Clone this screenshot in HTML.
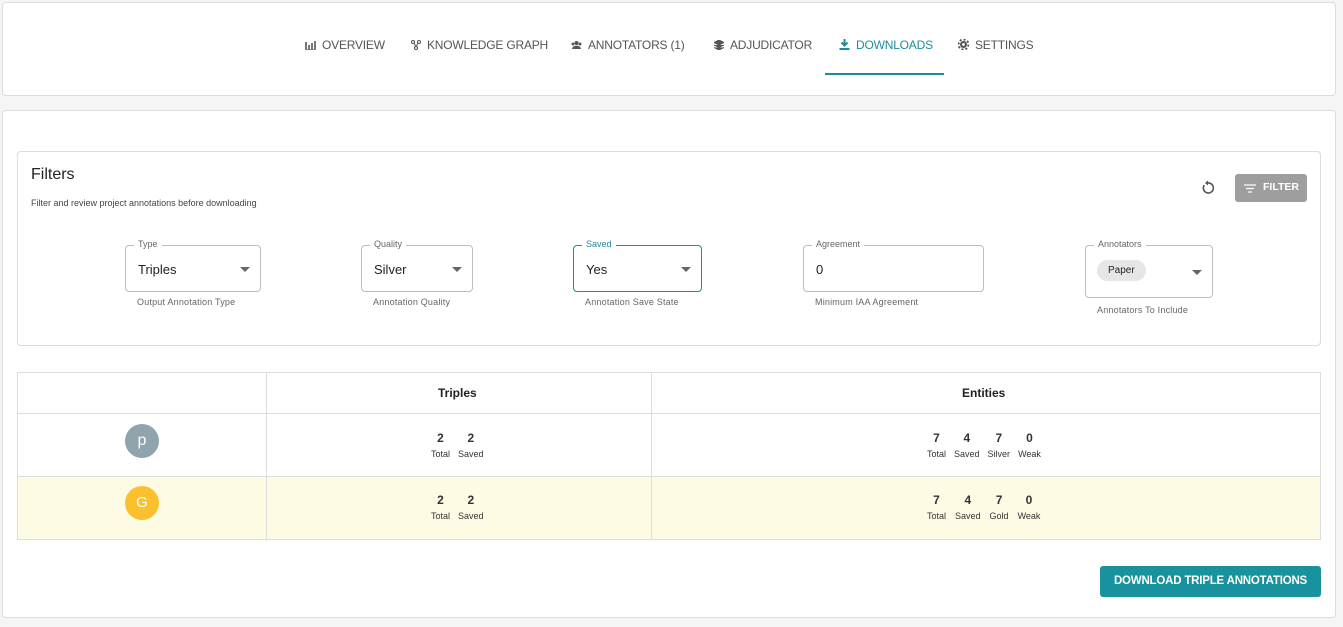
<!DOCTYPE html>
<html><head><style>
*{box-sizing:border-box;margin:0;padding:0}
body{width:1343px;height:627px;background:#f5f5f5;font-family:"Liberation Sans",sans-serif;position:relative;overflow:hidden;color:#222}
.abs{position:absolute}
.card{position:absolute;background:#fff;border:1px solid #dcdcdc;border-radius:4px}
.nav{position:absolute;top:38px;font-size:12px;color:#555;white-space:nowrap;letter-spacing:-0.2px}
.nav svg{vertical-align:-1px;margin-right:6px}
.fld{position:absolute;border:1px solid #bdbdbd;border-radius:4px;height:47px}
.fld .lb{position:absolute;top:-7px;left:8px;background:#fff;padding:0 4px;font-size:9px;color:#666}
.fld .v{position:absolute;left:12px;top:16px;font-size:13px;color:#222}
.fld .ar{position:absolute;right:10px;top:21px;width:0;height:0;border-left:5px solid transparent;border-right:5px solid transparent;border-top:5px solid #666}
.help{position:absolute;font-size:9px;color:#666;letter-spacing:.2px}
.st{text-align:center;font-size:9px;color:#333}
.st b{display:block;font-size:12px;margin-bottom:4px}
.grp{position:absolute;display:flex;gap:8px}
</style></head><body>
<div class="card" style="left:2px;top:2px;width:1334px;height:94px"></div>
<div class="nav" style="left:305px"><svg width="11" height="10"><path d="M0 10h11M1 2v7M4 5v4M7 3v6M10 1v8" stroke="#555" stroke-width="1.6"/></svg>OVERVIEW</div>
<div class="nav" style="left:411px"><svg width="10" height="10"><circle cx="2" cy="2" r="1.5" fill="none" stroke="#555"/><circle cx="8" cy="2" r="1.5" fill="none" stroke="#555"/><circle cx="5" cy="8" r="1.5" fill="none" stroke="#555"/><path d="M3 3l2 4M7 3l-2 4" stroke="#555"/></svg>KNOWLEDGE GRAPH</div>
<div class="nav" style="left:571px"><svg width="11" height="10"><circle cx="5.5" cy="3" r="2" fill="#555"/><circle cx="2" cy="4" r="1.5" fill="#555"/><circle cx="9" cy="4" r="1.5" fill="#555"/><path d="M1 9a4 3 0 0 1 9 0z" fill="#555"/></svg>ANNOTATORS (1)</div>
<div class="nav" style="left:714px"><svg width="10" height="10"><path d="M5 0l5 2.5-5 2.5-5-2.5zM0 5l5 2.5 5-2.5M0 7.5l5 2.5 5-2.5" fill="#555" stroke="#555"/></svg>ADJUDICATOR</div>
<div class="nav" style="left:839px;color:#1f8c9a"><svg width="11" height="11"><path d="M5.5 0v6M2.5 3.5l3 3 3-3M0.5 10h10" stroke="#1f8c9a" stroke-width="2" fill="none"/></svg>DOWNLOADS</div>
<div class="abs" style="left:825px;top:73px;width:119px;height:2px;background:#1f8c9a"></div>
<div class="nav" style="left:958px"><svg width="11" height="11"><circle cx="5.5" cy="5.5" r="5" fill="none" stroke="#555" stroke-width="2" stroke-dasharray="2 1.9"/><circle cx="5.5" cy="5.5" r="3.5" fill="#555"/><circle cx="5.5" cy="5.5" r="1.4" fill="#fff"/></svg>SETTINGS</div>

<div class="card" style="left:2px;top:110px;width:1334px;height:508px"></div>
<div class="card" style="left:17px;top:151px;width:1304px;height:195px"></div>
<div class="abs" style="left:31px;top:166px;font-size:16px;color:#222">Filters</div>
<div class="abs" style="left:31px;top:198px;font-size:9px;color:#444">Filter and review project annotations before downloading</div>
<svg class="abs" style="left:1200px;top:180px" width="16" height="16"><path d="M4.2 5.2A5 5 0 1 0 8 3" stroke="#555" stroke-width="1.6" fill="none"/><path d="M8 0.5v5l-3-2.5z" fill="#555"/></svg>
<div class="abs" style="left:1235px;top:174px;width:72px;height:28px;background:#9e9e9e;border-radius:3px;color:#fff;font-size:10.5px;font-weight:bold;line-height:27px;padding-left:28px">FILTER</div>
<svg class="abs" style="left:1244px;top:184px" width="12" height="10"><path d="M0 1h12M2 4.5h8M4 8h4" stroke="#fff" stroke-width="1.2"/></svg>

<div class="fld" style="left:125px;top:245px;width:136px"><span class="lb">Type</span><span class="v">Triples</span><span class="ar"></span></div>
<div class="help" style="left:137px;top:297px">Output Annotation Type</div>
<div class="fld" style="left:361px;top:245px;width:112px"><span class="lb">Quality</span><span class="v">Silver</span><span class="ar"></span></div>
<div class="help" style="left:373px;top:297px">Annotation Quality</div>
<div class="fld" style="left:573px;top:245px;width:129px;border-color:#1f8c9a"><span class="lb" style="color:#1f8c9a">Saved</span><span class="v">Yes</span><span class="ar"></span></div>
<div class="help" style="left:585px;top:297px">Annotation Save State</div>
<div class="fld" style="left:803px;top:245px;width:181px"><span class="lb">Agreement</span><span class="v">0</span></div>
<div class="help" style="left:815px;top:297px">Minimum IAA Agreement</div>
<div class="fld" style="left:1085px;top:245px;width:128px;height:53px"><span class="lb">Annotators</span><span class="abs" style="left:11px;top:14px;background:#e6e6e6;border-radius:12px;padding:5px 11px;font-size:10px">Paper</span><span class="ar" style="top:24px"></span></div>
<div class="help" style="left:1097px;top:305px">Annotators To Include</div>

<div class="abs" style="left:17px;top:372px;width:1304px;height:168px;background:#fff;border:1px solid #ddd"></div>
<div class="abs" style="left:18px;top:477px;width:1302px;height:62px;background:#fefbe5"></div>
<div class="abs" style="left:18px;top:413px;width:1302px;height:1px;background:#ddd"></div>
<div class="abs" style="left:18px;top:476px;width:1302px;height:1px;background:#ddd"></div>
<div class="abs" style="left:266px;top:373px;width:1px;height:166px;background:#ddd"></div>
<div class="abs" style="left:651px;top:373px;width:1px;height:166px;background:#ddd"></div>
<div class="abs" style="left:438px;top:386px;font-size:12px;font-weight:bold">Triples</div>
<div class="abs" style="left:962px;top:386px;font-size:12px;font-weight:bold">Entities</div>
<div class="abs" style="left:125px;top:424px;width:34px;height:34px;border-radius:50%;background:#90a4ae;color:#fff;font-size:16px;text-align:center;line-height:33px">p</div>
<div class="abs" style="left:125px;top:486px;width:34px;height:34px;border-radius:50%;background:#fbc02d;color:#fff;font-size:15px;text-align:center;line-height:34px">G</div>

<div class="grp" style="left:431px;top:431px"><div class="st"><b>2</b>Total</div><div class="st"><b>2</b>Saved</div></div>
<div class="grp" style="left:927px;top:431px"><div class="st"><b>7</b>Total</div><div class="st"><b>4</b>Saved</div><div class="st"><b>7</b>Silver</div><div class="st"><b>0</b>Weak</div></div>
<div class="grp" style="left:431px;top:493px"><div class="st"><b>2</b>Total</div><div class="st"><b>2</b>Saved</div></div>
<div class="grp" style="left:927px;top:493px;gap:9px"><div class="st"><b>7</b>Total</div><div class="st"><b>4</b>Saved</div><div class="st"><b>7</b>Gold</div><div class="st"><b>0</b>Weak</div></div>

<div class="abs" style="left:1100px;top:566px;width:221px;height:31px;background:#17929e;border-radius:3px;color:#fff;font-size:11.5px;font-weight:bold;text-align:center;line-height:31px;letter-spacing:-0.2px">DOWNLOAD TRIPLE ANNOTATIONS</div>
</body></html>
